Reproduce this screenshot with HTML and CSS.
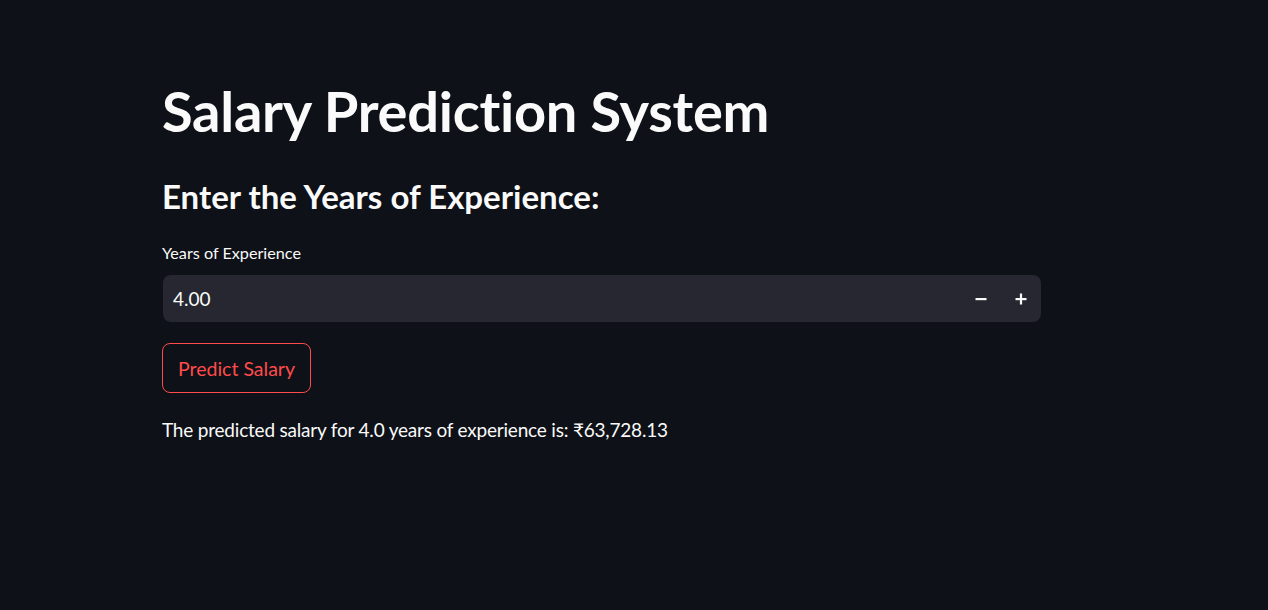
FILE: index.html
```html
<!DOCTYPE html>
<html lang="en">
<head>
<meta charset="utf-8">
<title>Salary Prediction System</title>
<link rel="stylesheet" href="styles.css">
</head>
<body>
<main class="main">
  <h1 class="title">Salary Prediction System</h1>
  <h2 class="subheader">Enter the Years of Experience:</h2>
  <label class="label" for="years">Years of Experience</label>
  <div class="number-input">
    <input id="years" class="number-field" type="text" value="4.00">
    <button class="step-btn" type="button" aria-label="Decrement">
      <svg width="12" height="12" viewBox="0 0 12 12"><rect x="0.5" y="5" width="11" height="2.2" fill="#fafafa"/></svg>
    </button>
    <button class="step-btn" type="button" aria-label="Increment">
      <svg width="12" height="12" viewBox="0 0 12 12"><rect x="0.5" y="5" width="11" height="2.2" fill="#fafafa"/><rect x="4.9" y="0.5" width="2.2" height="11" fill="#fafafa"/></svg>
    </button>
  </div>
  <button class="predict-btn" type="button">Predict Salary</button>
  <p class="result">The predicted salary for 4.0 years of experience is: ₹63,728.13</p>
</main>
</body>
</html>
```
FILE: styles.css
```css
html, body {
  margin: 0;
  padding: 0;
  background: #0e1117;
  color: #fafafa;
  font-family: "Lato", "Noto Sans", sans-serif;
  font-variant-ligatures: none;
  height: 100%;
}

.main {
  display: flex;
  flex-direction: column;
  align-items: flex-start;
  width: 879px;
  margin-left: 162px;
  padding-top: 79px;
}

.title {
  margin: 0;
  font-size: 56px;
  line-height: 64px;
  font-weight: 700;
  letter-spacing: -0.27px;
}

.subheader {
  margin: 33px 0 0;
  font-size: 33px;
  line-height: 40px;
  font-weight: 700;
}

.label {
  margin-top: 25px;
  font-size: 16.2px;
  line-height: 24px;
}

.number-input {
  margin-top: 10px;
  align-self: stretch;
  display: flex;
  align-items: center;
  height: 47px;
  background: #262730;
  border-radius: 8px;
  margin-left: 1px;
}

.number-field {
  flex: 1;
  background: transparent;
  border: none;
  outline: none;
  color: #fafafa;
  font-family: inherit;
  font-size: 19px;
  padding: 0 0 0 10px;
  height: 100%;
}

.step-btn {
  width: 40px;
  height: 100%;
  background: transparent;
  border: none;
  display: flex;
  align-items: center;
  justify-content: center;
  padding: 0;
}

.predict-btn {
  margin-top: 21px;
  height: 50px;
  padding: 0 15px;
  background: transparent;
  border: 1px solid #ff4b4b;
  border-radius: 8px;
  color: #ff4b4b;
  font-family: inherit;
  font-size: 19.5px;
}

.result {
  margin: 23px 0 0;
  font-size: 19px;
  line-height: 28px;
  letter-spacing: -0.2px;
}
```
